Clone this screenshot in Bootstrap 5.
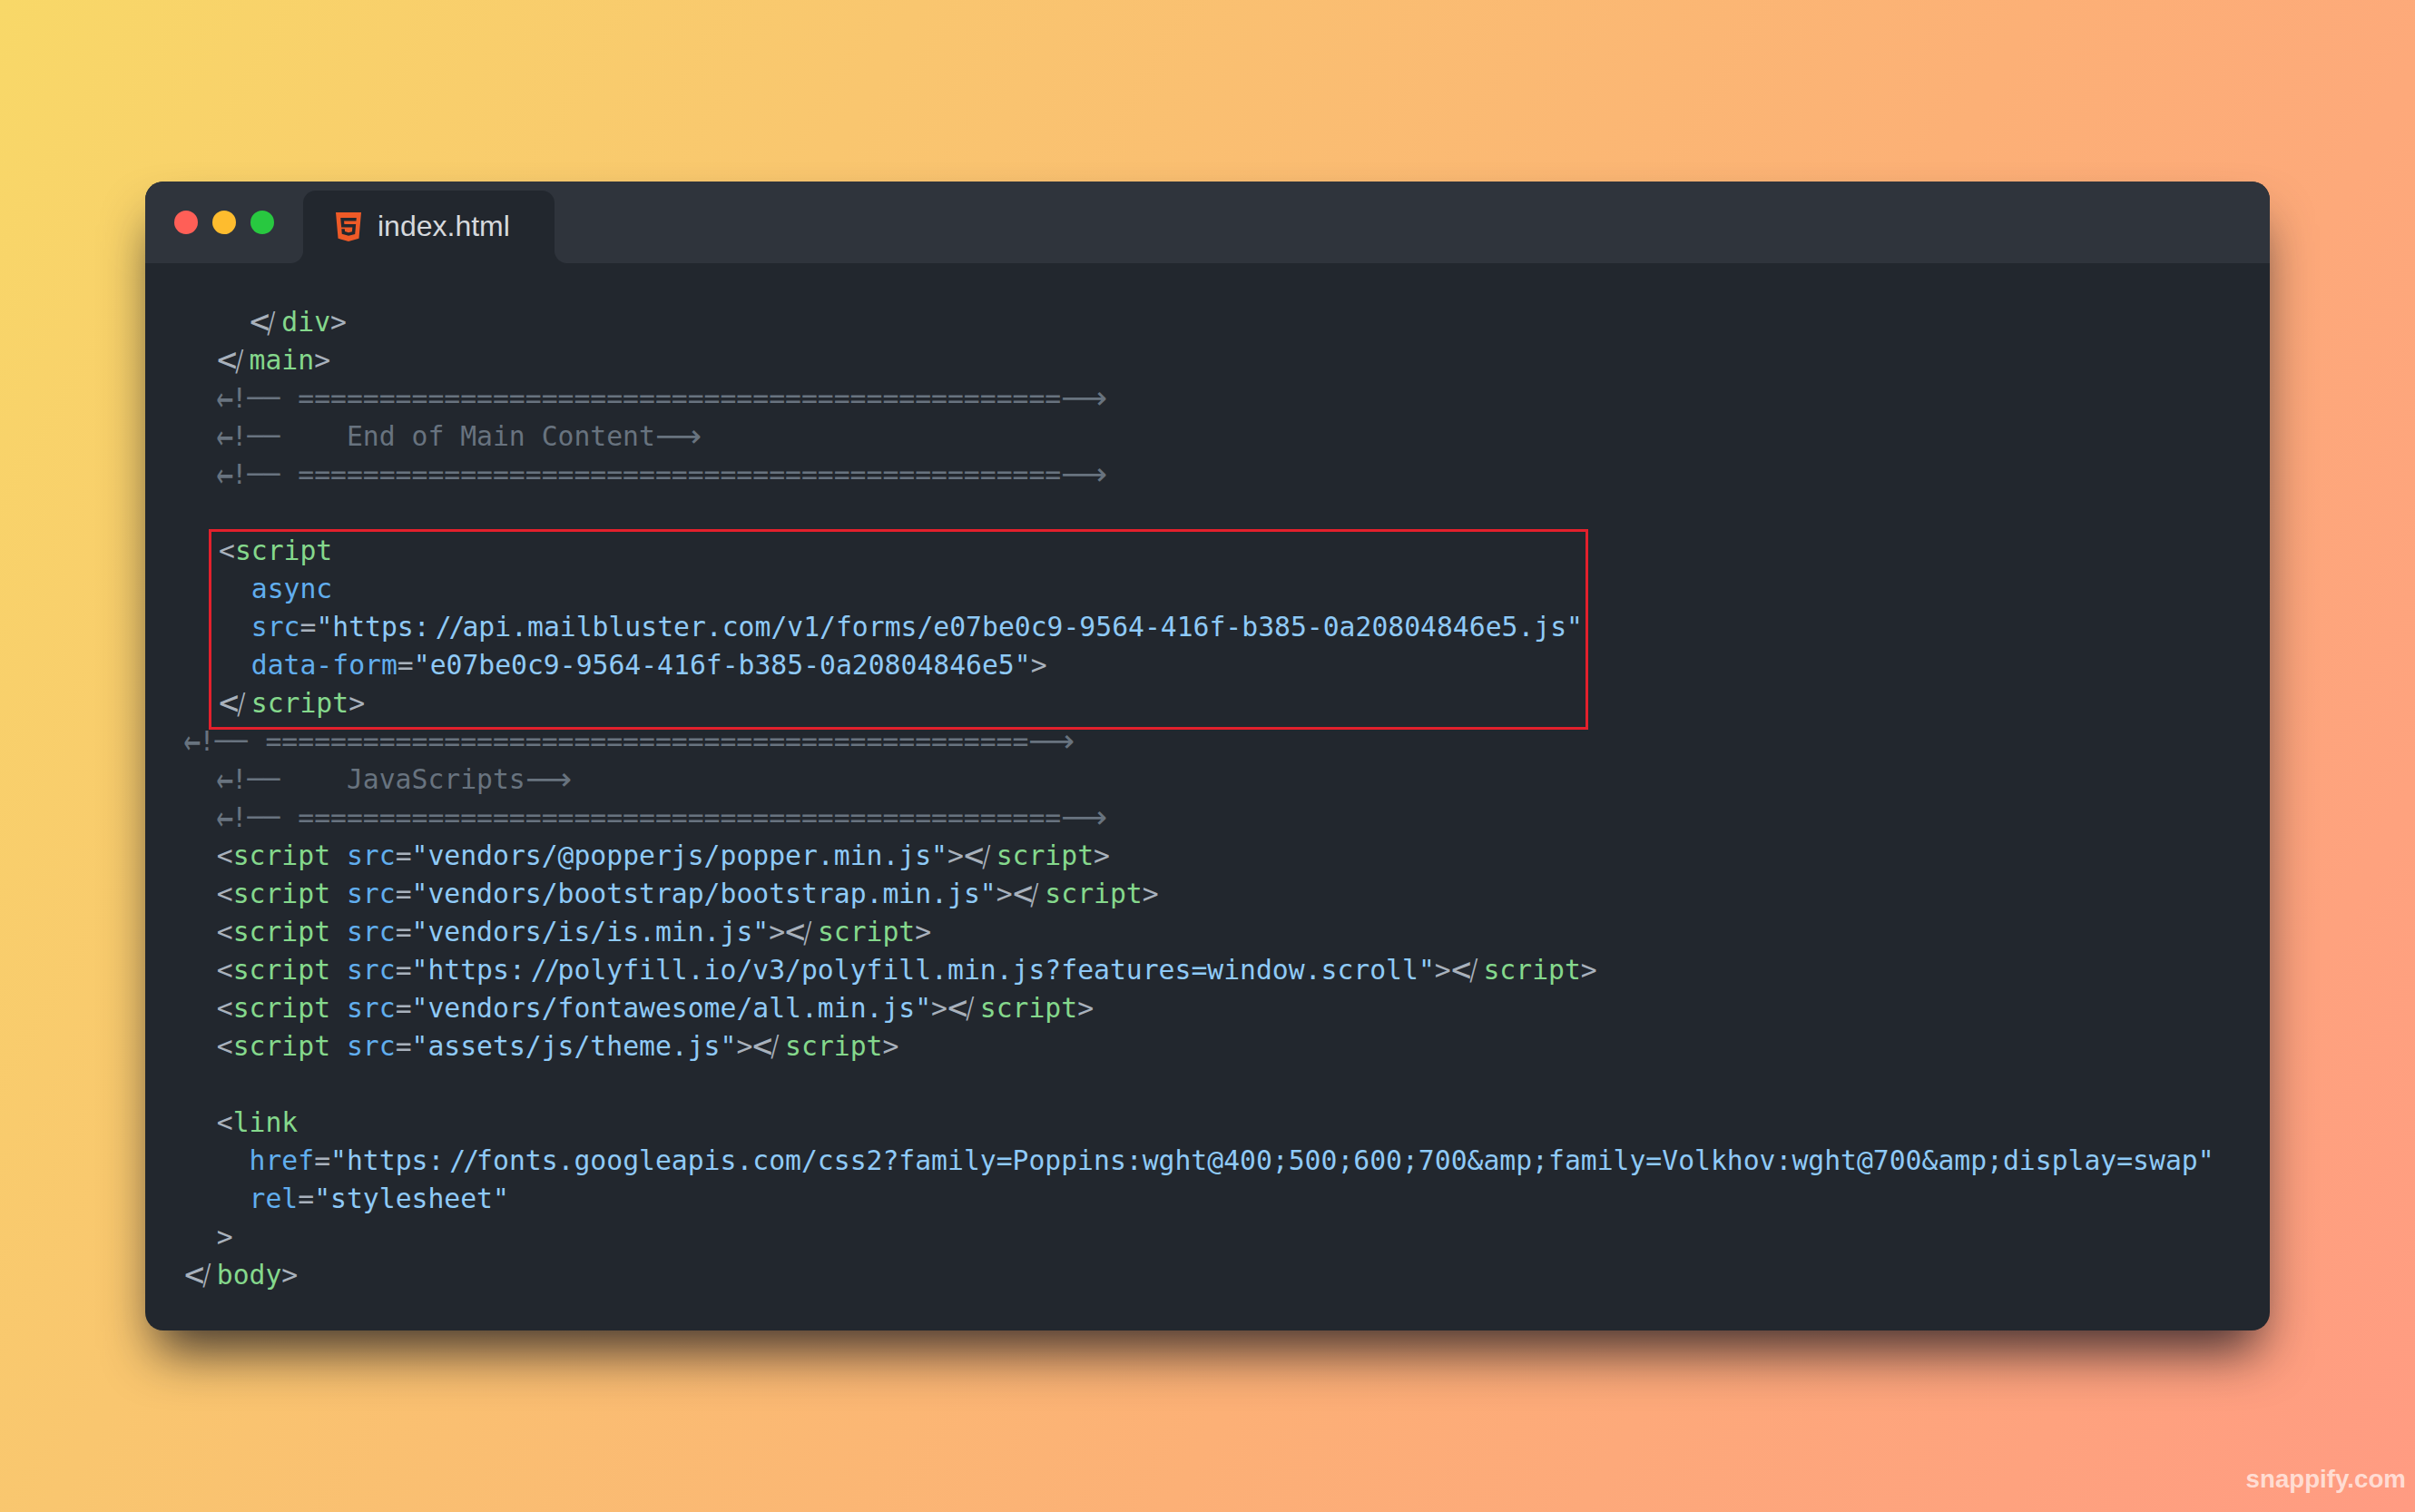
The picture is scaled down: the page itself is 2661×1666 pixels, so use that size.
<!DOCTYPE html>
<html lang="en">
<head>
<meta charset="utf-8">
<title>index.html</title>
<link href="https://cdn.jsdelivr.net/npm/bootstrap@5.3.0/dist/css/bootstrap.min.css" rel="stylesheet">
<style>
body{background:linear-gradient(120deg,#f8d868 0%,#f9c66f 28%,#fcb076 62%,#ff9b82 100%)}
.stage{padding:200px 160px;height:1666px;position:relative;overflow:hidden}
.win{height:1266px;background:#22272e;border-radius:20px;box-shadow:0 34px 56px -12px rgba(20,20,30,.8)}
.tbar{height:90px;background:#2f343c;border-radius:20px 20px 0 0;padding-left:32px}
.dot{width:26px;height:26px;border-radius:50%}
.d-r{background:#ff5f57}.d-y{background:#febc2e}.d-g{background:#28c840}
.dots{gap:16px;margin-right:32px}
.ftab{height:80px;width:277px;padding-left:36px;background:#22272e;border-radius:14px 14px 0 0;position:relative;gap:18px;color:#d6d9dd;font:32px/1 "Liberation Sans",sans-serif}
.ftab span{position:relative;top:-1px}
.ftab::before,.ftab::after{content:"";position:absolute;bottom:0;width:14px;height:14px}
.ftab::before{right:100%;background:radial-gradient(circle at 0 0,#2f343c 13.5px,#22272e 14.5px)}
.ftab::after{left:100%;background:radial-gradient(circle at 100% 0,#2f343c 13.5px,#22272e 14.5px)}
.hicon{width:28px;height:32px;flex:none}
.code{padding:44px 0 0 43px;font:29.73px/42px "DejaVu Sans Mono",monospace;color:#a8b1bc}
.ln{height:42px;white-space:pre}
.tg{color:#85d88c}.at{color:#61aeee}.st{color:#8fcaf7}.cm{color:#68737f}
.lt,.sl,.la,.bg{display:inline-block}
.lt,.sl,.la{width:1ch}
.lt{transform:scale(1.25,1.25);transform-origin:0 55%}
.sl{transform:translateX(-2px) scale(.62,1.05)}
.la{transform:scale(1.05,1.6);transform-origin:50% 55%}
.bg{transform:translateX(-2px)}
.ra{display:inline-block;width:3ch;font-family:"DejaVu Sans",sans-serif;line-height:1;transform:scale(1.2,1.15);transform-origin:0 55%}
.dsl{letter-spacing:-3px;padding-left:6px}
.redbox{border:3px solid #e3202c;width:1520px;margin:-3px 0 -8px 27px;padding:0 0 5px 8px;box-sizing:border-box}
.wmark{position:absolute;right:10px;bottom:20px;font:700 27.7px/1.2 "Liberation Sans",sans-serif;color:rgba(255,255,255,.66)}
</style>
</head>
<body class="m-0">
<div class="stage">
  <div class="win">
    <div class="tbar d-flex align-items-center">
      <div class="dots d-flex"><div class="dot d-r"></div><div class="dot d-y"></div><div class="dot d-g"></div></div>
      <div class="ftab d-flex align-items-center align-self-end">
        <svg class="hicon" viewBox="1.5 0 21 24" preserveAspectRatio="none"><path fill="#ee5a27" d="M1.5 0h21l-1.91 21.563L11.977 24l-8.564-2.438L1.5 0zm7.031 9.75l-.232-2.718 10.059.003.23-2.622L5.412 4.41l.698 8.01h9.126l-.326 3.426-2.91.804-2.955-.81-.188-2.11H6.248l.33 4.171L12 19.351l5.379-1.443.744-8.157H8.531z"/></svg>
        <span>index.html</span>
      </div>
    </div>
    <div class="code">
<div class="ln">    <span class="lt">&lt;</span><span class="sl">/</span><span class="tg">div</span>&gt;</div>
<div class="ln">  <span class="lt">&lt;</span><span class="sl">/</span><span class="tg">main</span>&gt;</div>
<div class="ln cm">  <span class="la">←</span><span class="bg">!──</span> ===============================================<span class="ra">⟶</span></div>
<div class="ln cm">  <span class="la">←</span><span class="bg">!──</span>    End of Main Content<span class="ra">⟶</span></div>
<div class="ln cm">  <span class="la">←</span><span class="bg">!──</span> ===============================================<span class="ra">⟶</span></div>
<div class="ln"></div>
<div class="redbox">
<div class="ln">&lt;<span class="tg">script</span></div>
<div class="ln">  <span class="at">async</span></div>
<div class="ln">  <span class="at">src</span>=<span class="st">"https:<span class="dsl">//</span>api.mailbluster.com/v1/forms/e07be0c9-9564-416f-b385-0a20804846e5.js"</span></div>
<div class="ln">  <span class="at">data-form</span>=<span class="st">"e07be0c9-9564-416f-b385-0a20804846e5"</span>&gt;</div>
<div class="ln"><span class="lt">&lt;</span><span class="sl">/</span><span class="tg">script</span>&gt;</div>
</div>
<div class="ln cm"><span class="la">←</span><span class="bg">!──</span> ===============================================<span class="ra">⟶</span></div>
<div class="ln cm">  <span class="la">←</span><span class="bg">!──</span>    JavaScripts<span class="ra">⟶</span></div>
<div class="ln cm">  <span class="la">←</span><span class="bg">!──</span> ===============================================<span class="ra">⟶</span></div>
<div class="ln">  &lt;<span class="tg">script</span> <span class="at">src</span>=<span class="st">"vendors/@popperjs/popper.min.js"</span>&gt;<span class="lt">&lt;</span><span class="sl">/</span><span class="tg">script</span>&gt;</div>
<div class="ln">  &lt;<span class="tg">script</span> <span class="at">src</span>=<span class="st">"vendors/bootstrap/bootstrap.min.js"</span>&gt;<span class="lt">&lt;</span><span class="sl">/</span><span class="tg">script</span>&gt;</div>
<div class="ln">  &lt;<span class="tg">script</span> <span class="at">src</span>=<span class="st">"vendors/is/is.min.js"</span>&gt;<span class="lt">&lt;</span><span class="sl">/</span><span class="tg">script</span>&gt;</div>
<div class="ln">  &lt;<span class="tg">script</span> <span class="at">src</span>=<span class="st">"https:<span class="dsl">//</span>polyfill.io/v3/polyfill.min.js?features=window.scroll"</span>&gt;<span class="lt">&lt;</span><span class="sl">/</span><span class="tg">script</span>&gt;</div>
<div class="ln">  &lt;<span class="tg">script</span> <span class="at">src</span>=<span class="st">"vendors/fontawesome/all.min.js"</span>&gt;<span class="lt">&lt;</span><span class="sl">/</span><span class="tg">script</span>&gt;</div>
<div class="ln">  &lt;<span class="tg">script</span> <span class="at">src</span>=<span class="st">"assets/js/theme.js"</span>&gt;<span class="lt">&lt;</span><span class="sl">/</span><span class="tg">script</span>&gt;</div>
<div class="ln"></div>
<div class="ln">  &lt;<span class="tg">link</span></div>
<div class="ln">    <span class="at">href</span>=<span class="st">"https:<span class="dsl">//</span>fonts.googleapis.com/css2?family=Poppins:wght@400;500;600;700&amp;amp;family=Volkhov:wght@700&amp;amp;display=swap"</span></div>
<div class="ln">    <span class="at">rel</span>=<span class="st">"stylesheet"</span></div>
<div class="ln">  &gt;</div>
<div class="ln"><span class="lt">&lt;</span><span class="sl">/</span><span class="tg">body</span>&gt;</div>
    </div>
  </div>
  <div class="wmark">snappify.com</div>
</div>
<script src="https://cdn.jsdelivr.net/npm/bootstrap@5.3.0/dist/js/bootstrap.bundle.min.js"></script>
</body>
</html>
